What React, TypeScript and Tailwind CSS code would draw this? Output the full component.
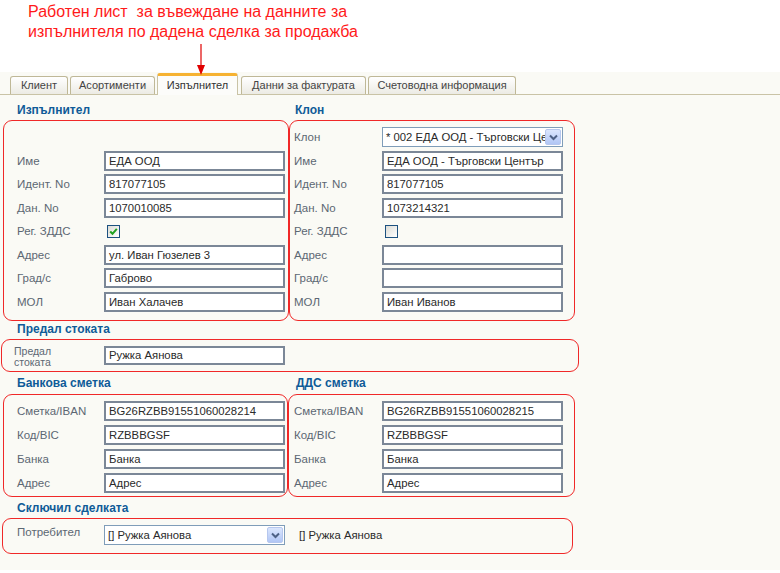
import React from "react";

const Label = ({ children, w }: { children: React.ReactNode; w: string }) => (
  <div className={`${w} shrink-0 text-[11.5px] leading-[14px] text-[#5c6773]`}>{children}</div>
);

const Field = ({ value }: { value?: string }) => (
  <div className="w-[181px] h-[20px] border-2 border-[#7b8797] bg-white px-[3px] text-[11.3px] leading-[16px] text-[#2a2a2a] whitespace-nowrap overflow-hidden">
    {value}
  </div>
);

const Chevron = () => (
  <svg width="9" height="7" viewBox="0 0 9 7">
    <path d="M1 1.5 L4.5 5 L8 1.5" fill="none" stroke="#4d6185" strokeWidth="2" />
  </svg>
);

const SelectBox = ({ value }: { value: string }) => (
  <div className="w-[181px] h-[20px] border border-[#7f9db9] bg-white flex items-center">
    <div className="flex-1 px-[3px] text-[11.3px] leading-[16px] text-[#2a2a2a] whitespace-nowrap overflow-hidden">{value}</div>
    <div className="w-[16px] h-[16px] mr-[1px] rounded-[2px] border border-[#b6c7ee] bg-gradient-to-b from-[#dbe6fd] to-[#b1c6f5] flex items-center justify-center">
      <Chevron />
    </div>
  </div>
);

const Check = ({ checked }: { checked?: boolean }) => (
  <div className="ml-[3px] w-[13px] h-[13px] border border-[#1c5180] bg-gradient-to-br from-[#dcdcd6] to-white flex items-center justify-center">
    {checked && (
      <svg width="9" height="9" viewBox="0 0 9 9">
        <path d="M1.2 4.5 L3.5 6.8 L7.8 1.8" fill="none" stroke="#21a121" strokeWidth="2" />
      </svg>
    )}
  </div>
);

const Row = ({ label, lw, children }: { label?: string; lw: string; children?: React.ReactNode }) => (
  <div className="flex items-center h-[20px]">
    <Label w={lw}>{label}</Label>
    {children}
  </div>
);

const Header = ({ children, cls }: { children: React.ReactNode; cls: string }) => (
  <div className={`${cls} text-[12px] font-bold text-[#0f5b98] leading-[16px]`}>{children}</div>
);

const Tab = ({ label, w, active }: { label: string; w: string; active?: boolean }) =>
  active ? (
    <div
      className={`${w} h-[22px] -mb-[1px] mr-[3px] rounded-t-[3px] border-t-[3px] border-x border-t-[#f6b232] border-x-[#c9c3a6] bg-[#fcfcfa] text-[11px] leading-[16px] text-[#333] text-center pt-[1px]`}
    >
      {label}
    </div>
  ) : (
    <div
      className={`${w} h-[18px] mr-[2px] rounded-t-[3px] border border-b-0 border-[#bfb897] bg-gradient-to-b from-white to-[#ecebe4] text-[11px] leading-[17px] text-[#444] text-center`}
    >
      {label}
    </div>
  );

export default function App() {
  return (
    <div className="relative w-[780px] h-[573px] overflow-hidden bg-white font-['Liberation_Sans',Arial,sans-serif]">
      <div className="pl-[28px] pt-[2px] text-[16px] leading-[20px] text-[#ff1a1a] whitespace-pre">
        <div>Работен лист  за въвеждане на данните за</div>
        <div>изпълнителя по дадена сделка за продажба</div>
      </div>

      <svg className="absolute left-[196px] top-[44px]" width="10" height="32" viewBox="0 0 10 32">
        <line x1="5" y1="0" x2="5" y2="24" stroke="#e00000" strokeWidth="1.2" />
        <path d="M1 21 L9 21 L5 31 Z" fill="#e00000" />
      </svg>

      <div className="mt-[30px] h-[498px] bg-[#fafaf5]">
        {/* Tabs */}
        <div className="flex items-end h-[23px] pt-[1px] pl-[10px] border-b border-[#c9c3a6]">
          <Tab label="Клиент" w="w-[58px]" />
          <Tab label="Асортименти" w="w-[85px]" />
          <Tab label="Изпълнител" w="w-[81px]" active />
          <Tab label="Данни за фактурата" w="w-[125px]" />
          <Tab label="Счетоводна информация" w="w-[148px]" />
        </div>

        {/* Headers row 1 */}
        <div className="flex h-[25px] pt-[7px]">
          <Header cls="w-[289px] pl-[17px]">Изпълнител</Header>
          <Header cls="pl-[6px]">Клон</Header>
        </div>

        {/* Top boxes */}
        <div className="flex h-[201px]">
          <div className="ml-[3px] w-[286px] rounded-[9px] border border-[#f02828] pt-[6px] pl-[13px] flex flex-col gap-[3.57px]">
            <Row lw="w-[87px]" />
            <Row label="Име" lw="w-[87px]"><Field value="ЕДА ООД" /></Row>
            <Row label="Идент. No" lw="w-[87px]"><Field value="817077105" /></Row>
            <Row label="Дан. No" lw="w-[87px]"><Field value="1070010085" /></Row>
            <Row label="Рег. ЗДДС" lw="w-[87px]"><Check checked /></Row>
            <Row label="Адрес" lw="w-[87px]"><Field value="ул. Иван Гюзелев 3" /></Row>
            <Row label="Град/с" lw="w-[87px]"><Field value="Габрово" /></Row>
            <Row label="МОЛ" lw="w-[87px]"><Field value="Иван Халачев" /></Row>
          </div>
          <div className="w-[286px] rounded-[9px] border border-[#f02828] pt-[6px] pl-[4px] flex flex-col gap-[3.57px]">
            <Row label="Клон" lw="w-[88px]"><SelectBox value="* 002 ЕДА ООД - Търговски Център" /></Row>
            <Row label="Име" lw="w-[88px]"><Field value="ЕДА ООД - Търговски Център" /></Row>
            <Row label="Идент. No" lw="w-[88px]"><Field value="817077105" /></Row>
            <Row label="Дан. No" lw="w-[88px]"><Field value="1073214321" /></Row>
            <Row label="Рег. ЗДДС" lw="w-[88px]"><Check /></Row>
            <Row label="Адрес" lw="w-[88px]"><Field /></Row>
            <Row label="Град/с" lw="w-[88px]"><Field /></Row>
            <Row label="МОЛ" lw="w-[88px]"><Field value="Иван Иванов" /></Row>
          </div>
        </div>

        {/* Предал стоката */}
        <div className="h-[18px]">
          <Header cls="pl-[17px] leading-[14px]">Предал стоката</Header>
        </div>
        <div className="ml-[1px] w-[578px] h-[33px] rounded-[9px] border border-[#f02828] pl-[12px] flex items-center">
          <div className="w-[90px] shrink-0 text-[10.5px] leading-[11px] text-[#5c6773] pt-[2px]">
            <div>Предал</div>
            <div>стоката</div>
          </div>
          <div className="w-[181px] h-[19px] border-2 border-[#7b8797] bg-white px-[3px] text-[11.3px] leading-[15px] text-[#2a2a2a]">
            Ружка Аянова
          </div>
        </div>

        {/* Bank headers */}
        <div className="flex h-[22px] pt-[3px]">
          <Header cls="w-[288px] pl-[17px]">Банкова сметка</Header>
          <Header cls="pl-[8px]">ДДС сметка</Header>
        </div>
        <div className="flex h-[103px]">
          <div className="ml-[3px] w-[285px] rounded-[9px] border border-[#f02828] pt-[6px] pl-[13px] flex flex-col gap-[4px]">
            <Row label="Сметка/IBAN" lw="w-[87px]"><Field value="BG26RZBB91551060028214" /></Row>
            <Row label="Код/BIC" lw="w-[87px]"><Field value="RZBBBGSF" /></Row>
            <Row label="Банка" lw="w-[87px]"><Field value="Банка" /></Row>
            <Row label="Адрес" lw="w-[87px]"><Field value="Адрес" /></Row>
          </div>
          <div className="w-[287px] rounded-[9px] border border-[#f02828] pt-[6px] pl-[5px] flex flex-col gap-[4px]">
            <Row label="Сметка/IBAN" lw="w-[88px]"><Field value="BG26RZBB91551060028215" /></Row>
            <Row label="Код/BIC" lw="w-[88px]"><Field value="RZBBBGSF" /></Row>
            <Row label="Банка" lw="w-[88px]"><Field value="Банка" /></Row>
            <Row label="Адрес" lw="w-[88px]"><Field value="Адрес" /></Row>
          </div>
        </div>

        {/* Сключил сделката */}
        <div className="h-[21px] pt-[3px]">
          <Header cls="pl-[17px]">Сключил сделката</Header>
        </div>
        <div className="ml-[2px] w-[571px] h-[36px] rounded-[9px] border border-[#f02828] pl-[14px] pt-[6px] flex items-start">
          <div className="w-[87px] shrink-0 text-[11.5px] leading-[14px] text-[#5c6773]">Потребител</div>
          <SelectBox value="[] Ружка Аянова" />
          <div className="ml-[14px] pt-[3px] text-[11.3px] leading-[14px] text-[#2a2a2a]">[] Ружка Аянова</div>
        </div>
      </div>
    </div>
  );
}
